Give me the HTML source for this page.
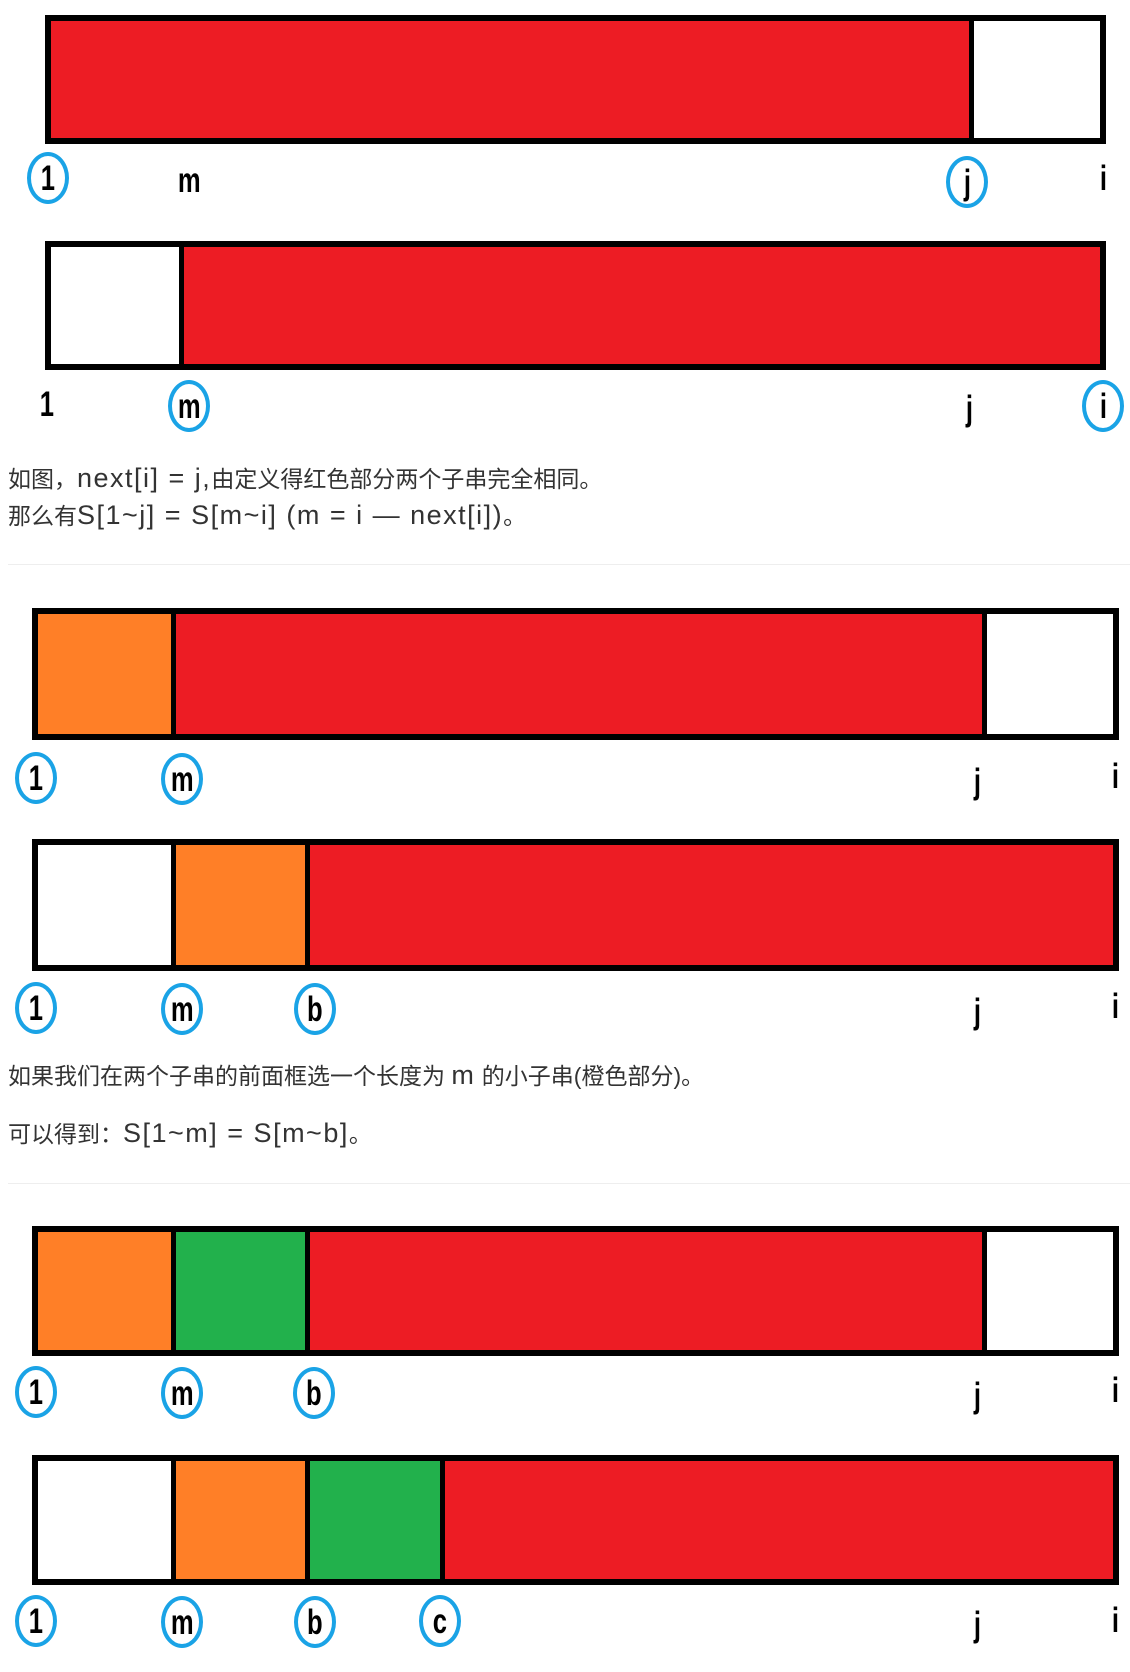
<!DOCTYPE html>
<html><head><meta charset="utf-8"><style>
body{margin:0;width:1130px;height:1672px;background:#fff;position:relative;overflow:hidden;font-family:"Liberation Sans","Noto Sans CJK SC",sans-serif}
.bar{position:absolute;border:6px solid #000;background:#fff;box-sizing:border-box}
.seg{position:absolute;top:0;bottom:0;box-sizing:border-box}
.bl{border-left:5px solid #000}
.r{background:#ed1c24}.o{background:#ff7f27}.g{background:#22b14c}.w{background:#fff}
.lb{position:absolute;width:60px;height:60px;margin-left:-30px;margin-top:-30px;display:flex;align-items:center;justify-content:center;font-weight:bold;font-size:32px;color:#000}
.lb span{display:inline-block;transform:scale(0.8,1.1)}
.c::before{content:"";position:absolute;left:9px;top:4px;width:34px;height:44px;border:4px solid #1aa3e6;border-radius:50%}
.t{position:absolute;left:8px;font-size:23px;color:#333;white-space:nowrap}
.t b{font-weight:normal;font-size:27px;letter-spacing:1.5px}
.hr{position:absolute;left:8px;right:0;height:1px;background:#eee}
</style></head><body>

<div class="bar" style="left:45px;top:15px;width:1061px;height:129px">
<div class="seg r" style="left:0;width:918px"></div>
<div class="seg w bl" style="left:918px;right:0"></div></div>
<div class="lb c" style="left:48px;top:178px"><span>1</span></div>
<div class="lb" style="left:189px;top:180px"><span>m</span></div>
<div class="lb c" style="left:967px;top:182px"><span>j</span></div>
<div class="lb" style="left:1103px;top:178px"><span>i</span></div>

<div class="bar" style="left:45px;top:241px;width:1061px;height:129px">
<div class="seg r bl" style="left:128px;right:0"></div></div>
<div class="lb" style="left:47px;top:404px"><span>1</span></div>
<div class="lb c" style="left:189px;top:406px"><span>m</span></div>
<div class="lb" style="left:969px;top:408px"><span>j</span></div>
<div class="lb c" style="left:1103px;top:406px"><span>i</span></div>

<div class="t" style="top:460px">如图，<b>next[i] = j,</b>由定义得红色部分两个子串完全相同。</div>
<div class="t" style="top:497px">那么有<b>S[1~j] = S[m~i] (m = i — next[i])</b>。</div>
<div class="hr" style="top:564px"></div>

<div class="bar" style="left:32px;top:608px;width:1087px;height:132px">
<div class="seg o" style="left:0;width:133px"></div>
<div class="seg r bl" style="left:133px;width:811px"></div>
<div class="seg w bl" style="left:944px;right:0"></div></div>
<div class="lb c" style="left:36px;top:778px"><span>1</span></div>
<div class="lb c" style="left:182px;top:779px"><span>m</span></div>
<div class="lb" style="left:977px;top:781px"><span>j</span></div>
<div class="lb" style="left:1115px;top:776px"><span>i</span></div>

<div class="bar" style="left:32px;top:839px;width:1087px;height:132px">
<div class="seg o bl" style="left:133px;width:134px"></div>
<div class="seg r bl" style="left:267px;right:0"></div></div>
<div class="lb c" style="left:36px;top:1008px"><span>1</span></div>
<div class="lb c" style="left:182px;top:1009px"><span>m</span></div>
<div class="lb c" style="left:315px;top:1009px"><span>b</span></div>
<div class="lb" style="left:977px;top:1011px"><span>j</span></div>
<div class="lb" style="left:1115px;top:1006px"><span>i</span></div>

<div class="t" style="top:1057px">如果我们在两个子串的前面框选一个长度为 <b>m</b> 的小子串(橙色部分)。</div>
<div class="t" style="top:1115px">可以得到：<b>S[1~m] = S[m~b]</b>。</div>
<div class="hr" style="top:1183px"></div>

<div class="bar" style="left:32px;top:1226px;width:1087px;height:130px">
<div class="seg o" style="left:0;width:133px"></div>
<div class="seg g bl" style="left:133px;width:134px"></div>
<div class="seg r bl" style="left:267px;width:677px"></div>
<div class="seg w bl" style="left:944px;right:0"></div></div>
<div class="lb c" style="left:36px;top:1392px"><span>1</span></div>
<div class="lb c" style="left:182px;top:1393px"><span>m</span></div>
<div class="lb c" style="left:314px;top:1393px"><span>b</span></div>
<div class="lb" style="left:977px;top:1395px"><span>j</span></div>
<div class="lb" style="left:1115px;top:1390px"><span>i</span></div>

<div class="bar" style="left:32px;top:1455px;width:1087px;height:130px">
<div class="seg o bl" style="left:133px;width:134px"></div>
<div class="seg g bl" style="left:267px;width:135px"></div>
<div class="seg r bl" style="left:402px;right:0"></div></div>
<div class="lb c" style="left:36px;top:1621px"><span>1</span></div>
<div class="lb c" style="left:182px;top:1622px"><span>m</span></div>
<div class="lb c" style="left:315px;top:1622px"><span>b</span></div>
<div class="lb c" style="left:440px;top:1621px"><span>c</span></div>
<div class="lb" style="left:977px;top:1624px"><span>j</span></div>
<div class="lb" style="left:1115px;top:1620px"><span>i</span></div>

</body></html>
